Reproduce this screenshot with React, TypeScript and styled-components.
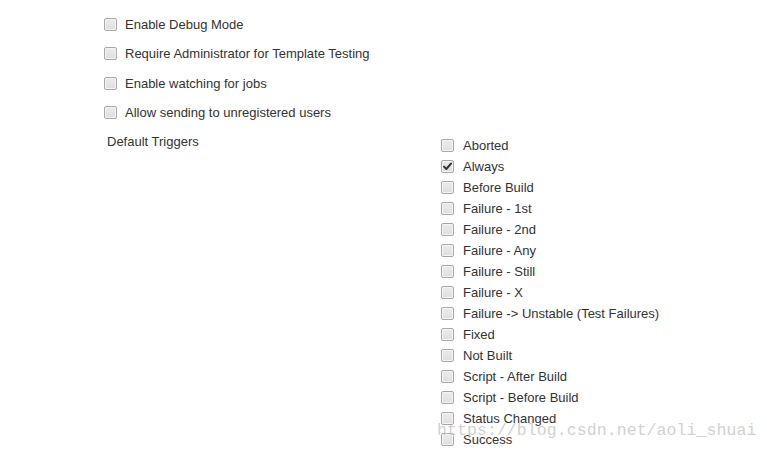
import styled, { createGlobalStyle } from 'styled-components';

const GlobalStyle = createGlobalStyle`
    html, body {
        margin: 0;
        padding: 0;
        background: #ffffff;
    }
    body {
        font-family: "Liberation Sans", Arial, sans-serif;
        font-size: 13px;
        color: #333333;
    }
`;

type Option = {
    label: string;
    checked?: boolean;
}

const GLOBAL_OPTIONS: Option[] = [
    { label: 'Enable Debug Mode' },
    { label: 'Require Administrator for Template Testing' },
    { label: 'Enable watching for jobs' },
    { label: 'Allow sending to unregistered users' },
];

const TRIGGERS: Option[] = [
    { label: 'Aborted' },
    { label: 'Always', checked: true },
    { label: 'Before Build' },
    { label: 'Failure - 1st' },
    { label: 'Failure - 2nd' },
    { label: 'Failure - Any' },
    { label: 'Failure - Still' },
    { label: 'Failure - X' },
    { label: 'Failure -> Unstable (Test Failures)' },
    { label: 'Fixed' },
    { label: 'Not Built' },
    { label: 'Script - After Build' },
    { label: 'Script - Before Build' },
    { label: 'Status Changed' },
    { label: 'Success' },
];

const CheckBox = ({ checked }: { checked?: boolean }) => (
    <Box>
        {checked &&
            <svg width="11" height="11" viewBox="0 0 11 11">
                <path d="M2 5.6 L4.3 8 L9 2.6" fill="none" stroke="#333" strokeWidth="2" strokeLinecap="round" strokeLinejoin="round" />
            </svg>
        }
    </Box>
);

const App = () => {
    return (
        <Page>
            <GlobalStyle />
            <GlobalOptions>
                {GLOBAL_OPTIONS.map(opt => (
                    <OptionRow key={opt.label}>
                        <CheckBox checked={opt.checked} />
                        <OptionLabel>{opt.label}</OptionLabel>
                    </OptionRow>
                ))}
            </GlobalOptions>
            <TriggersSection>
                <SectionLabel>Default Triggers</SectionLabel>
                <TriggerList>
                    {TRIGGERS.map(opt => (
                        <TriggerRow key={opt.label}>
                            <CheckBox checked={opt.checked} />
                            <TriggerLabel>{opt.label}</TriggerLabel>
                        </TriggerRow>
                    ))}
                </TriggerList>
            </TriggersSection>
            <Watermark>https://blog.csdn.net/aoli_shuai</Watermark>
        </Page>
    );
}

const Page = styled.div`
    position: relative;
    width: 767px;
    height: 451px;
    overflow: hidden;
    padding-left: 104px;
    padding-top: 9.5px;
    box-sizing: border-box;
`;

const GlobalOptions = styled.div`
    display: flex;
    flex-direction: column;
`;

const OptionRow = styled.div`
    display: flex;
    align-items: center;
    height: 29.5px;
`;

const Box = styled.span`
    position: relative;
    display: flex;
    align-items: center;
    justify-content: center;
    width: 11px;
    height: 11px;
    border: 1px solid #a9a9a9;
    border-radius: 2px;
    background: linear-gradient(#ececec, #dedede);
    box-shadow: inset 0 0 0 1px #f4f4f4;
    flex-shrink: 0;
`;

const OptionLabel = styled.span`
    margin-left: 8px;
    line-height: 16px;
    padding-top: 1px;
`;

const TriggersSection = styled.div`
    display: grid;
    grid-template-columns: 337px 1fr;
    margin-top: 4.5px;
`;

const SectionLabel = styled.div`
    padding-left: 3px;
    padding-top: 2px;
    line-height: 16px;
`;

const TriggerList = styled.div`
    display: flex;
    flex-direction: column;
    padding-top: 3px;
`;

const TriggerRow = styled.div`
    display: flex;
    align-items: center;
    height: 21px;
`;

const TriggerLabel = styled.span`
    margin-left: 9px;
    line-height: 16px;
    padding-top: 1px;
`;

const Watermark = styled.div`
    position: absolute;
    left: 437px;
    top: 421px;
    font-family: "Liberation Mono", "DejaVu Sans Mono", monospace;
    font-size: 16.5px;
    letter-spacing: 0.08px;
    color: rgba(170, 170, 170, 0.55);
    text-shadow: 1px 1px 0 rgba(255, 255, 255, 0.6);
    pointer-events: none;
    white-space: nowrap;
`;

export default App;
